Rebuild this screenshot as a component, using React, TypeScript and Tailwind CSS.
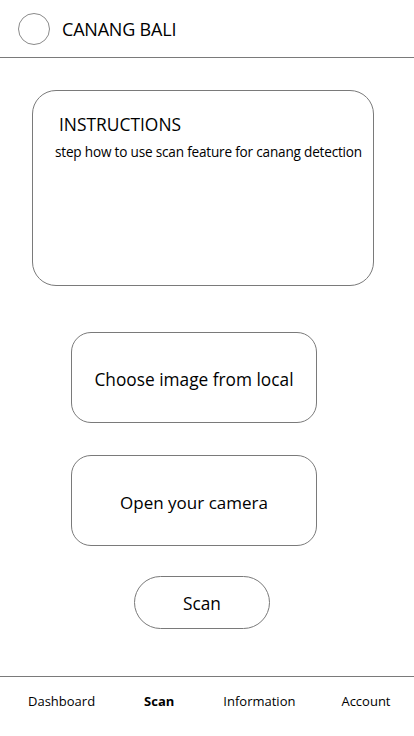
import React from "react";

export default function App() {
  const font = { fontFamily: '"Open Sans", "Noto Sans", sans-serif' };
  return (
    <div className="w-[414px] h-[736px] bg-white text-black flex flex-col" style={font}>
      <header className="h-[58px] flex items-center border-b border-[#7a7a7a] pl-[18px] gap-[12px]">
        <div className="w-[32px] h-[32px] rounded-full border border-[#8a8a8a]" />
        <span className="text-[18px] leading-none tracking-[-0.2px]">CANANG BALI</span>
      </header>
      <main className="flex-1 flex flex-col items-start">
        <section className="mt-[32px] ml-[32px] w-[342px] h-[196px] rounded-[24px] border border-[#7a7a7a] pt-[22px] pl-[26px]">
          <div className="text-[17.4px] leading-[22px]">INSTRUCTIONS</div>
          <div className="text-[13.6px] leading-[18px] mt-[8px] ml-[-4px] tracking-[-0.2px] whitespace-nowrap">step how to use scan feature for canang detection</div>
        </section>
        <button className="mt-[46px] ml-[71px] w-[246px] h-[91px] rounded-[20px] border border-[#7a7a7a] text-[17.3px] flex items-center justify-center pt-[5px]">Choose image from local</button>
        <button className="mt-[32px] ml-[71px] w-[246px] h-[91px] rounded-[20px] border border-[#7a7a7a] text-[17px] flex items-center justify-center pt-[4px]">Open your camera</button>
        <button className="mt-[30px] ml-[134px] w-[136px] h-[53px] rounded-full border border-[#7a7a7a] text-[17.3px] flex items-center justify-center pt-[3px]">Scan</button>
      </main>
      <nav className="h-[60px] border-t border-[#7a7a7a] flex items-start pt-[15px] text-[13px]">
        <span className="ml-[28px]">Dashboard</span>
        <span className="ml-[49px] font-bold">Scan</span>
        <span className="ml-[49px]">Information</span>
        <span className="ml-[46px]">Account</span>
      </nav>
    </div>
  );
}
